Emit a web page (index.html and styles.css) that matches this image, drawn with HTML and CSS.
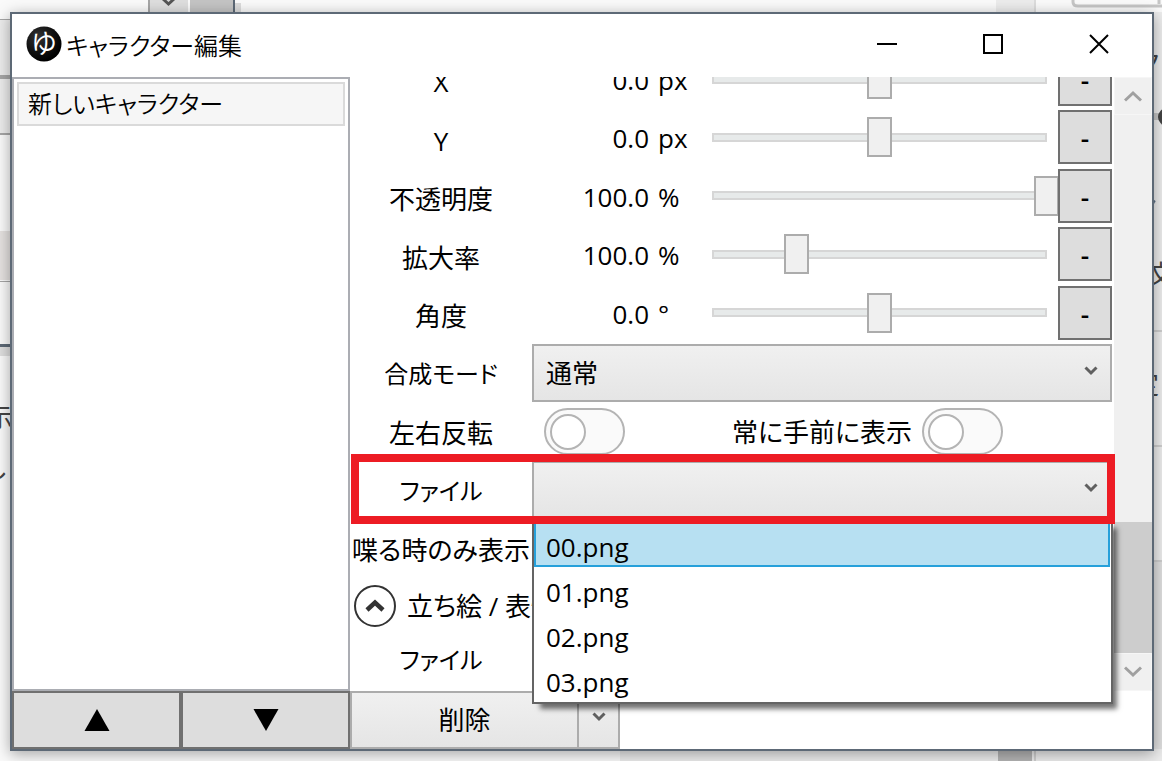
FILE: index.html
```html
<!DOCTYPE html>
<html lang="ja">
<head>
<meta charset="utf-8">
<title>キャラクター編集</title>
<link rel="stylesheet" href="styles.css">
</head>
<body>
<svg class="desktop" width="1162" height="761" viewBox="0 0 1162 761" aria-hidden="true">
  <rect width="1162" height="761" fill="#fafafa"/>
  <g>
    <path d="M148 0h2v14h-2z" fill="#a6a6a6"/>
    <path d="M150 0h38v14h-38z" fill="#dedede"/>
    <path d="M163 -1l5.500 5 5.500-5" fill="none" stroke="#555" stroke-width="3"/>
    <path d="M190 0h43v14h-43z" fill="#c4c4c4"/>
    <path d="M233 0h2v14h-2z" fill="#5d6976"/>
    <path d="M235 3h6v10h-6z" fill="#dcdcdc"/>
    <path d="M996 0h38v14h-38z" fill="#ececec"/>
    <path d="M1034 0h2v14h-2z" fill="#dcdcdc"/>
    <path d="M1073 -4v6q0 4 5 4h90M1159-4v8" fill="none" stroke="#c6c6c6" stroke-width="3"/>
  </g>
  <g>
    <path d="M0 20h12v56H0zM0 79h12v54H0z" fill="#ececec"/>
    <path d="M0 19h12v1H0zM0 75h12v4H0zM0 133h12v2H0zM0 281h12v1H0z" fill="#a6a6a6"/>
    <path d="M0 231h12v49H0z" fill="#e5e2e0"/>
    <path d="M0 344h12v3H0z" fill="#5d6976"/>
    <path d="M0 347h12v9H0z" fill="#dedede"/>
    <text x="-13" y="427">示</text>
    <text x="-16" y="478">し</text>
  </g>
  <g>
    <path d="M1152 12h10v749h-10z" fill="#ededed"/>
    <path d="M1152 560h10v201h-10z" fill="#dfdfdf"/>
    <path d="M1152 113h10v7h-10z" fill="#c6c6c6"/>
    <path d="M1152 330h10v2h-10zM1152 445h10v2h-10zM1152 560h10v2h-10z" fill="#cfcfcf"/>
    <circle cx="1167" cy="117" r="9" fill="#444"/>
    <text x="1136" y="72">ク</text>
    <text x="1148" y="284">文</text>
    <text x="1133" y="394">定</text>
    <path d="M1154 200l1.500 1-1 3z" fill="#38506c"/>
  </g>
  <g>
    <path d="M620 749h542v12H620z" fill="#ececec"/>
    <path d="M998 749h34v12h-34z" fill="#b4b4b4"/>
    <path d="M1034 749h2v12h-2z" fill="#cfcfcf"/>
  </g>
</svg>

<div class="window">
  <header class="titlebar">
    <svg class="logo" viewBox="0 0 36 36" aria-hidden="true">
      <defs><radialGradient id="ball" cx=".35" cy=".3" r=".7"><stop offset="0" stop-color="#333"/><stop offset=".6" stop-color="#111"/><stop offset="1" stop-color="#000"/></radialGradient></defs>
      <circle cx="18" cy="18" r="17.500" fill="url(#ball)"/>
      <text class="logo-mark" x="18" y="27" text-anchor="middle">ゆ</text>
    </svg>
    <h1 class="title">キャラクター編集</h1>
    <button class="caption" type="button" aria-label="最小化"><svg width="20" height="20" viewBox="0 0 20 20"><path d="M0 10h20"/></svg></button>
    <button class="caption" type="button" aria-label="最大化"><svg width="20" height="20" viewBox="0 0 20 20"><path d="M1 1h18v18H1z"/></svg></button>
    <button class="caption" type="button" aria-label="閉じる"><svg width="20" height="20" viewBox="0 0 20 20"><path d="M1 1l18 18M19 1L1 19"/></svg></button>
  </header>

  <div class="body">
    <aside class="sidebar">
      <div class="list"><button class="list-item" type="button">新しいキャラクター</button></div>
      <div class="order">
        <button class="square-button" type="button" aria-label="上へ"><svg width="26" height="22" viewBox="0 0 26 22"><path d="M13 0l12.500 22H.5z"/></svg></button>
        <button class="square-button" type="button" aria-label="下へ"><svg width="26" height="22" viewBox="0 0 26 22"><path d="M13 22L.5 0h25z"/></svg></button>
      </div>
    </aside>

    <main class="detail">
      <div class="scroll">
        <form class="form">
          <div class="rows">
            <div class="row"><label class="label" for="x">X</label><div class="control slider-control"><output class="number">0.0</output><span class="unit">px</span><input class="slider" id="x" type="range" value="50"><button class="square-button minus" type="button">-</button></div></div>
            <div class="row"><label class="label" for="y">Y</label><div class="control slider-control"><output class="number">0.0</output><span class="unit">px</span><input class="slider" id="y" type="range" value="50"><button class="square-button minus" type="button">-</button></div></div>
            <div class="row"><label class="label" for="opacity">不透明度</label><div class="control slider-control"><output class="number">100.0</output><span class="unit">%</span><input class="slider" id="opacity" type="range" value="100"><button class="square-button minus" type="button">-</button></div></div>
            <div class="row"><label class="label" for="zoom">拡大率</label><div class="control slider-control"><output class="number">100.0</output><span class="unit">%</span><input class="slider" id="zoom" type="range" value="25"><button class="square-button minus" type="button">-</button></div></div>
            <div class="row"><label class="label" for="angle">角度</label><div class="control slider-control"><output class="number">0.0</output><span class="unit">°</span><input class="slider" id="angle" type="range" value="50"><button class="square-button minus" type="button">-</button></div></div>
            <div class="row"><label class="label label-kana" for="blend">合成モード</label><div class="control combo"><select class="select" id="blend"><option>通常</option></select><svg class="chevron" width="14" height="10" viewBox="0 0 14 10"><path d="M1.500 1.500L7 7l5.500-5.500"/></svg></div></div>
            <div class="row"><label class="label" for="flip">左右反転</label><div class="control toggles"><input class="toggle" id="flip" type="checkbox"><label for="front">常に手前に表示</label><input class="toggle" id="front" type="checkbox"></div></div>
            <div class="row row-marked"><label class="label label-kana" for="file">ファイル</label>
              <div class="control combo"><select class="select" id="file" aria-label="ファイル"><option></option></select><svg class="chevron" width="14" height="10" viewBox="0 0 14 10"><path d="M1.500 1.500L7 7l5.500-5.500"/></svg>
                <div class="popup" role="listbox" aria-label="ファイル">
                  <button class="option option-active" type="button" role="option" aria-selected="true">00.png</button>
                  <button class="option" type="button" role="option">01.png</button>
                  <button class="option" type="button" role="option">02.png</button>
                  <button class="option" type="button" role="option">03.png</button>
                </div>
              </div>
              <div class="marker"></div>
            </div>
            <div class="row"><label class="label" for="talk">喋る時のみ表示</label><div class="control toggles"><input class="toggle" id="talk" type="checkbox"></div></div>
          </div>
          <button class="expander" type="button" aria-expanded="true">
            <svg width="44" height="44" viewBox="0 0 44 44" aria-hidden="true"><circle cx="22" cy="22" r="20" fill="none" stroke="#333" stroke-width="2"/><path d="M14 26l8-7.500 8 7.500" fill="none" stroke="#333" stroke-width="4.500"/></svg>
            <span>立ち絵 / 表情</span>
          </button>
          <div class="row row-last"><label class="label label-kana" for="file2">ファイル</label><div class="control combo"><select class="select" id="file2"><option></option></select></div></div>
        </form>
        <div class="scrollbar">
          <button class="scroll-button" type="button" aria-label="上へスクロール"><svg width="18" height="12" viewBox="0 0 18 12"><path d="M1 10.500l8-7.500 8 7.500"/></svg></button>
          <div class="scroll-track"><div class="scroll-thumb"></div></div>
          <button class="scroll-button" type="button" aria-label="下へスクロール"><svg width="18" height="12" viewBox="0 0 18 12"><path d="M1 1.500L9 9l8-7.500"/></svg></button>
        </div>
      </div>
      <footer class="actions">
        <button class="action delete" type="button">削除</button>
        <button class="action more" type="button" aria-label="その他"><svg width="14" height="10" viewBox="0 0 14 10"><path d="M1.500 1.500L7 7l5.500-5.500"/></svg></button>
      </footer>
    </main>
  </div>
</div>
</body>
</html>
```
FILE: styles.css
```css
*, *::before { box-sizing: border-box; }

body {
  margin: 0;
  height: 100vh;
  padding: 12px 8px 10px 10px;
  overflow: hidden;
  font: 26px/36px "Open Sans", "Noto Sans CJK JP", sans-serif;
  font-feature-settings: "palt";
  color: #000;
}

button, input, select {
  font: inherit;
  font-feature-settings: inherit;
  color: inherit;
  margin: 0;
  padding: 0;
  border: 0;
  border-radius: 0;
}

/* the application behind the dialog */
.desktop { position: absolute; left: 0; top: 0; z-index: -1; fill: #444; }

.window {
  height: 100%;
  display: flex;
  flex-direction: column;
  background: #fff;
  border: 2px solid #5d6976;
  box-shadow: 0 3px 14px rgba(0, 0, 0, .35);
}

/* title bar */
.titlebar {
  position: relative;
  z-index: 2;
  flex: 0 0 63px;
  display: flex;
  align-items: center;
  padding-left: 14px;
  background: #fff;
}
.logo { width: 36px; height: 36px; margin: 0 4px 3px 0; }
.logo-mark { font-size: 26px; fill: #fff; }
.title { margin: 0; flex: 1; font-size: 24px; font-weight: 350; }
.caption {
  align-self: stretch;
  width: 106px;
  padding-bottom: 3px;
  display: grid;
  place-items: center;
  background: none;
}
.caption svg { fill: none; stroke: #000; stroke-width: 2; }

.body { flex: 1; min-height: 0; display: grid; grid-template-columns: 338px 1fr; }

/* character list */
.sidebar { display: flex; flex-direction: column; }
.list { flex: 1; border: 2px solid #abadb3; padding: 3px; }
.list-item {
  width: 100%;
  height: 44px;
  padding: 0 9px;
  text-align: left;
  font-size: 24px;
  font-weight: 350;
  background: #f6f6f6;
  border: 2px solid #dadada;
}
.order { display: grid; grid-template-columns: 1fr 1fr; height: 58px; }
.square-button {
  display: grid;
  place-items: center;
  background: #ddd;
  border: 2px solid #707070;
}

/* properties */
.detail { display: flex; flex-direction: column; min-width: 0; }
.scroll { flex: 1; min-height: 0; display: flex; gap: 2px; }
.form { flex: 1; min-width: 0; margin-top: -25px; }
.rows { display: grid; grid-template-rows: repeat(9, 1fr); height: 526px; }
.row { display: grid; grid-template-columns: 182px 1fr; }
.label { align-self: center; text-align: center; white-space: nowrap; padding-top: 2px; }
.label-kana { font-size: 24px; }
.control { min-width: 0; }

.slider-control {
  display: grid;
  grid-template-columns: 117px 42px 1fr 54px;
  align-items: center;
  height: 54px;
}
.number { text-align: right; padding-top: 2px; }
.unit { padding: 2px 0 0 9px; }
.slider {
  appearance: none;
  min-width: 0;
  height: 40px;
  margin-left: 9px;
  width: calc(100% - 8px);
  background:
    linear-gradient(#e7eaea, #e7eaea) center / calc(100% - 28px) 5px no-repeat,
    linear-gradient(#d6d6d6, #d6d6d6) center / calc(100% - 24px) 9px no-repeat;
}
.slider::-webkit-slider-thumb {
  appearance: none;
  width: 25px;
  height: 40px;
  background: #f0f0f0;
  border: 2px solid #acacac;
}
.minus { position: relative; height: 54px; padding-top: 2px; font-weight: 600; }

.combo { position: relative; height: 58px; }
.select {
  appearance: none;
  width: 100%;
  height: 100%;
  padding: 0 12px;
  background: linear-gradient(#f0f0f0, #e5e5e5);
  border: 2px solid #acacac;
}
.chevron { position: absolute; right: 14px; top: 22px; pointer-events: none; }
.chevron path, .more path { fill: none; stroke: #606060; stroke-width: 3; }

.toggles { display: grid; grid-template-columns: 200px 178px 1fr; align-items: center; white-space: nowrap; }
.toggle {
  appearance: none;
  width: 81px;
  height: 47px;
  margin: 0 0 0 12px;
  padding: 4px;
  background: #fafafa;
  border: 2px solid #b4b4b4;
  border-radius: 24px;
}
.toggle::before {
  content: "";
  display: block;
  width: 36px;
  height: 36px;
  background: #fff;
  border: 2px solid #b4b4b4;
  border-radius: 50%;
}

/* the highlighted file row and its open list */
.row-marked { position: relative; }
.marker {
  position: absolute;
  z-index: 6;
  inset: -7px -3px -4px 1px;
  border: 8px solid #ed1c24;
  pointer-events: none;
}
.popup {
  position: absolute;
  z-index: 5;
  left: 0;
  right: -1px;
  top: 100%;
  padding: 1px 1px 0 0;
  background: #fff;
  border: 2px solid #646464;
  box-shadow: 6px 7px 5px -2px rgba(0, 0, 0, .55);
}
.option {
  display: block;
  width: 100%;
  height: 45px;
  padding: 4px 10px 0;
  text-align: left;
  background: #fff;
  border: 2px solid #fff;
}
.option-active { background: #b7e0f2; border-color: #26a0da; }

.expander {
  display: flex;
  align-items: center;
  gap: 10px;
  height: 55px;
  padding-left: 3px;
  background: none;
  white-space: nowrap;
}
.row-last { height: 52px; }
.row-last .combo { height: 52px; }

/* scroll bar */
.scrollbar { flex: 0 0 38px; display: flex; flex-direction: column; background: #f0f0f0; }
.scroll-button {
  height: 38px;
  display: grid;
  place-items: center;
  background: #f0f0f0;
  border: 1px solid #f6f6f6;
}
.scroll-button path { fill: none; stroke: #a0a0a0; stroke-width: 3; }
.scroll-track { flex: 1; display: flex; align-items: flex-end; }
.scroll-thumb { width: 100%; height: 24.4%; background: #cdcdcd; }

/* bottom actions */
.actions { display: flex; height: 58px; }
.action {
  height: 58px;
  background: linear-gradient(#f0f0f0, #e5e5e5);
  border: 2px solid #acacac;
}
.delete { width: 229px; }
.more { width: 41px; border-left: 0; padding-bottom: 6px; display: grid; place-items: center; }
```
